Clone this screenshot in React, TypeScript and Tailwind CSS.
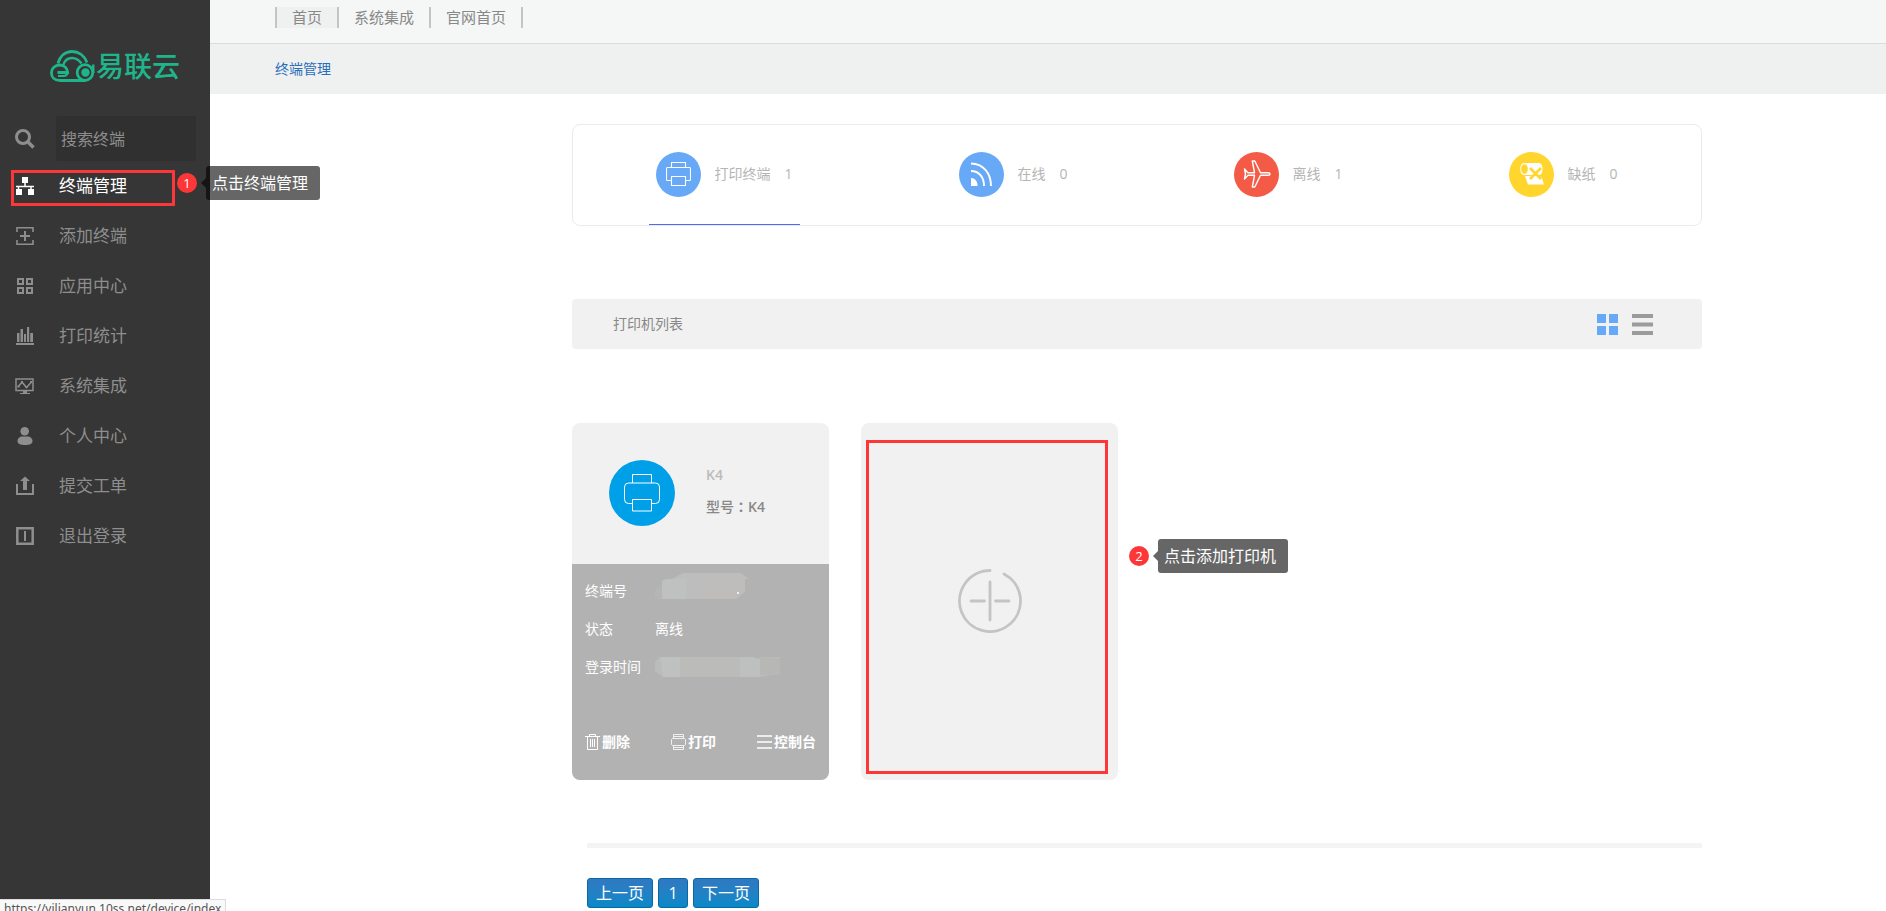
import type { ReactNode } from 'react'

const navItems = [
  { label: '添加终端', icon: <AddIcon /> },
  { label: '应用中心', icon: <AppsIcon /> },
  { label: '打印统计', icon: <StatsIcon /> },
  { label: '系统集成', icon: <MonitorIcon /> },
  { label: '个人中心', icon: <UserIcon /> },
  { label: '提交工单', icon: <UploadIcon /> },
  { label: '退出登录', icon: <ExitIcon /> },
]

const stats = [
  { label: '打印终端', count: 1, color: 'bg-[#67a9f7]', icon: <PrinterIcon />, active: true },
  { label: '在线', count: 0, color: 'bg-[#67a9f7]', icon: <SignalIcon />, active: false },
  { label: '离线', count: 1, color: 'bg-[#f45b47]', icon: <PlaneIcon />, active: false },
  { label: '缺纸', count: 0, color: 'bg-[#ffd52e]', icon: <PaperIcon />, active: false },
]

function Logo() {
  return (
    <a href="#" className="flex items-center gap-px text-[#1fb58a]">
      <svg width="45" height="32" viewBox="0 0 45 32" fill="none" stroke="currentColor" strokeWidth="2.800">
        <path d="M8 13.500C10 6 15.500 1.500 22 1.500S34.500 5.500 37 12.500" />
        <path d="M13 15.500C14.500 10.500 18 8 22 8s7 2 9.500 5.500" strokeWidth="2.500" />
        <path d="M36 30.500H10C4.500 30.500 1.400 27 1.400 22.700S5 15 9.800 15s7.400 3.500 7.800 7.500H7.500" />
        <path d="M17.500 22c0 2.500-1.500 4-4 4H8" strokeWidth="2.200" />
        <circle cx="35" cy="22.500" r="7.800" />
        <circle cx="35.500" cy="22.500" r="4.200" fill="currentColor" stroke="none" />
        <path d="M43.300 14.500V23" strokeWidth="2.400" />
      </svg>
      <span className="text-[28px] leading-8 font-medium">易联云</span>
    </a>
  )
}

function SearchIcon() {
  return (
    <svg width="20" height="20" viewBox="0 0 20 20" fill="none" stroke="#8e8e8e" strokeWidth="3">
      <circle cx="8" cy="8" r="6.500" />
      <path d="M12.500 12.500l6 6" strokeWidth="3.500" />
    </svg>
  )
}

function TreeIcon() {
  return (
    <svg width="20" height="20" viewBox="0 0 20 20" fill="#fff">
      <path d="M7 1h6v6H7zM1 13h6v6H1zM13 13h6v6h-6z" />
      <path d="M10 7v3M1 10.500h18M3.500 10v3M16 10v3" stroke="#fff" strokeWidth="1.500" />
    </svg>
  )
}

function AddIcon() {
  return (
    <svg width="20" height="20" viewBox="0 0 20 20" fill="none" stroke="currentColor" strokeWidth="1.600">
      <path d="M2 6V1.800h16V6M2 14v4.200h16V14" />
      <path d="M5 10h10M10 5v10" strokeWidth="2" />
    </svg>
  )
}

function AppsIcon() {
  return (
    <svg width="20" height="20" viewBox="0 0 20 20" fill="none" stroke="currentColor" strokeWidth="2">
      <path d="M3 3h5v5H3zM12 3h5v5h-5zM3 12h5v5H3zM12 12h5v5h-5z" />
    </svg>
  )
}

function StatsIcon() {
  return (
    <svg width="20" height="20" viewBox="0 0 20 20" fill="currentColor">
      <path d="M2 7h2.500v9H2zM5.500 3H8v13H5.500zM9 8h2v8H9zM12 1h2.200v15H12zM15.200 7H18v9h-2.800zM1 17h18v2H1z" />
    </svg>
  )
}

function MonitorIcon() {
  return (
    <svg width="20" height="20" viewBox="0 0 20 20" fill="none" stroke="currentColor" strokeWidth="1.500">
      <path d="M1 3h17v11.500H1z" />
      <path d="M3 11l4-5 4.500 5.500L16.500 6" />
      <path d="M8 15h4v2h3v1H5v-1h3z" fill="currentColor" stroke="none" />
      <path d="M6 5h2v2.500H6zM10.500 10h2v2h-2zM15 5h2v2h-2zM2.500 9.500h2v2h-2z" fill="currentColor" stroke="none" />
    </svg>
  )
}

function UserIcon() {
  return (
    <svg width="20" height="20" viewBox="0 0 20 20" fill="currentColor">
      <circle cx="9.700" cy="5.300" r="4.300" />
      <path d="M6 10.500h8c2.500 1 3.500 3 3.500 4.500 0 3-3 4-7.500 4s-7.500-1-7.500-4c0-1.500 1-3.500 3.500-4.500z" />
    </svg>
  )
}

function UploadIcon() {
  return (
    <svg width="20" height="20" viewBox="0 0 20 20" fill="currentColor">
      <path d="M10 .5l5 4.500h-3v9H8V5H5z" />
      <path d="M1 8h2v9h14V8h2v11H1z" />
    </svg>
  )
}

function ExitIcon() {
  return (
    <svg width="20" height="20" viewBox="0 0 20 20" fill="none" stroke="currentColor" strokeWidth="2.500">
      <path d="M2.300 2.300h15.400v15.400H2.300z" />
      <path d="M10 5v10" strokeWidth="2" />
    </svg>
  )
}

function PrinterIcon() {
  return (
    <svg width="25" height="24" viewBox="0 0 25 24" fill="none" stroke="#fff" strokeWidth="1.100">
      <path d="M5.500 5.500v-5h14v5" />
      <path d="M5.500 18.500h-4a1 1 0 0 1-1-1V6.500a1 1 0 0 1 1-1h22a1 1 0 0 1 1 1v11a1 1 0 0 1-1 1h-4" />
      <path d="M5.500 14.500h14v9h-14z" />
    </svg>
  )
}

function SignalIcon() {
  return (
    <svg width="23" height="24" viewBox="0 0 23 24" fill="none" stroke="#fff" strokeWidth="1.900">
      <path d="M1 16c4 0 6.500 3 6.500 8H1z" fill="#fff" stroke="none" />
      <path d="M1 9c8 0 13 6 13 15M1 1.500C13 1.500 21 11 21 24" />
    </svg>
  )
}

function PlaneIcon() {
  return (
    <svg width="28" height="28" viewBox="0 0 28 28" fill="none" stroke="#fff" strokeWidth="1.400" strokeLinejoin="round">
      <path d="M1.500 9L5 12.700h6.500L9.300 1h2.500l5.700 11.700h7.500c1.500 0 2 .8 2 1.300s-.5 1.300-2 1.300h-7.500L11.800 27H9.300l2.200-11.700H5L1.500 19l1-5z" />
    </svg>
  )
}

function PaperIcon() {
  return (
    <svg width="24" height="22" viewBox="0 0 24 22">
      <path d="M4 0h15c2.500 0 3.500 3 3.500 6s-1 6-3.500 6H4C1.500 12 .3 9 .3 6S1.500 0 4 0z" fill="#fff" />
      <ellipse cx="4.500" cy="6" rx="3.300" ry="4.800" fill="#ffd52e" />
      <path d="M5 13h12l4.500 1L24 21.500H8z" fill="#fff" />
      <path d="M10 5l11 11M21 5L10 16" stroke="#ffd52e" strokeWidth="2.600" />
    </svg>
  )
}

function Marker({ num, text }: { num: number; text: string }) {
  return (
    <div className="flex items-center">
      <span className="flex size-5 items-center justify-center rounded-full bg-[#fd3737] text-[13px] leading-5 text-white">
        {num}
      </span>
      <svg width="5" height="10" viewBox="0 0 5 10" className="ml-1">
        <path d="M5 0v10L0 5z" fill="#000" fillOpacity=".6" />
      </svg>
      <span className="h-[34px] rounded-[3px] bg-black/60 pr-3 pl-[6px] text-[16px] leading-[34px] whitespace-nowrap text-white">
        {text}
      </span>
    </div>
  )
}

function Action({ icon, children }: { icon: ReactNode; children: ReactNode }) {
  return (
    <button className="flex items-center gap-[2px] text-[14px] leading-5 font-bold text-white">
      {icon}
      {children}
    </button>
  )
}

function Sidebar() {
  return (
    <aside className="relative w-[210px] shrink-0 bg-[#363636] text-[#8e8e8e]">
      <div className="flex h-[116px] items-start pt-[50px] pl-[50px]">
        <Logo />
      </div>
      <div className="flex h-[45px] items-center pr-[14px] pl-[15px]">
        <label htmlFor="search" aria-label="搜索终端" className="w-[41px] shrink-0">
          <SearchIcon />
        </label>
        <input
          id="search"
          type="text"
          placeholder="搜索终端"
          className="h-full w-full min-w-0 rounded-[3px] bg-[#303030] px-[5px] text-[16px] placeholder:text-[#8e8e8e]"
        />
      </div>
      <nav className="text-[17px] leading-6">
        <a href="#" className="flex h-[50px] items-center gap-6 pl-[15px] text-white">
          <TreeIcon />
          终端管理
        </a>
        {navItems.map((item) => (
          <a key={item.label} href="#" className="flex h-[50px] items-center gap-6 pl-[15px]">
            {item.icon}
            {item.label}
          </a>
        ))}
      </nav>
      <div className="absolute top-[170px] left-[11px] h-9 w-[164px] border-[3px] border-[#fd3737]" />
      <div className="absolute top-[166px] left-[177px] z-10">
        <Marker num={1} text="点击终端管理" />
      </div>
    </aside>
  )
}

function TopBar() {
  return (
    <header>
      <div className="h-11 border-b border-[#d9dcdc] bg-[#f5f7f6] pt-[7px] pl-[65px]">
        <nav className="flex h-[21px] text-[15px] leading-[21px] text-[#888]">
          <a href="#" className="border-x-2 border-[#c4c4c4] bg-[#eff1f1] px-[15px]">首页</a>
          <a href="#" className="border-r-2 border-[#c4c4c4] px-[15px]">系统集成</a>
          <a href="#" className="border-r-2 border-[#c4c4c4] px-[15px]">官网首页</a>
        </nav>
      </div>
      <div className="flex h-[50px] items-center bg-[#eff1f1] pl-[65px]">
        <a href="#" className="text-[14px] leading-5 text-[#2a6ebb]">终端管理</a>
      </div>
    </header>
  )
}

function StatCard() {
  return (
    <section className="flex h-[102px] justify-around rounded-lg border border-[#ebebeb] text-[14px] leading-5 text-[#b5b5b5]">
      {stats.map((s) => (
        <div
          key={s.label}
          className={`flex items-center border-b px-[7px] pt-[16px] pb-[17px] ${s.active ? 'border-[#4a6cf7]' : 'border-transparent'}`}
        >
          <span className={`mr-[13px] flex size-[45px] items-center justify-center rounded-full ${s.color}`}>
            {s.icon}
          </span>
          <span className="mr-[14px]">{s.label}</span>
          <span>{s.count}</span>
        </div>
      ))}
    </section>
  )
}

function PrinterCard() {
  return (
    <article className="w-[257px] overflow-hidden rounded-lg bg-[#f1f1f1]">
      <div className="flex h-[141px] items-start pt-[37px] pl-[37px] text-[14px] leading-5 font-semibold">
        <span className="flex size-[66px] items-center justify-center rounded-full bg-[#00a0e9]">
          <svg width="36" height="38" viewBox="0 0 36 38" fill="none" stroke="#fff">
            <path d="M8.500 9V.5h19V9" />
            <path d="M8.500 29.500h-4a4 4 0 0 1-4-4V13a4 4 0 0 1 4-4h27a4 4 0 0 1 4 4v12.500a4 4 0 0 1-4 4h-4" />
            <path d="M8.500 25.500h19v11.500h-19z" />
          </svg>
        </span>
        <div className="flex flex-col gap-[11px] pt-[5px] pl-[31px]">
          <h3 className="text-[#bbb]">K4</h3>
          <p className="text-[#888]">
            <span className="font-medium">型号</span>
            <span lang="zh-TW" className="font-['Noto_Sans_CJK_TC',sans-serif]">：</span>
            K4
          </p>
        </div>
      </div>
      <div className="h-[216px] bg-[#b2b2b2] px-[13px] pt-2 text-[14px] text-white">
        <dl className="grid grid-cols-[70px_1fr] leading-[38px]">
          <dt>终端号</dt>
          <dd className="flex h-[38px] items-start">
            <svg width="96" height="28" viewBox="0 0 96 28">
              <path d="M0 22l2-5 9-3v-4L28 1h58l8 6h-4v13l-9 1v6H11L0 26z" fill="#bdbdbd" />
              <path d="M0 26l1-9 10-5v14z" fill="#b5b5b5" />
              <path d="M7 9l4-2h20v20H7z" fill="#bfc1c0" />
              <path d="M51 7h39v13l-9 7H51z" fill="#bebdbb" />
              <circle cx="83" cy="21" r="1" fill="#fff" />
            </svg>
          </dd>
          <dt>状态</dt>
          <dd>离线</dd>
          <dt>登录时间</dt>
          <dd className="flex items-center">
            <svg width="126" height="20" viewBox="0 0 126 20">
              <path d="M5 0h93l1 3 7-3h19v18h-8l-11 2H8L0 14V5z" fill="#bbbbba" />
              <path d="M5 0h20v20H8z" fill="#bfc0c0" />
              <path d="M85 0h13l7 3v17H85z" fill="#bec0c0" />
              <path d="M105 1h20v17h-20z" fill="#b7b7b6" />
            </svg>
          </dd>
        </dl>
        <div className="mt-[46px] flex justify-between">
          <Action
            icon={
              <svg width="15" height="16" viewBox="0 0 15 16" fill="none" stroke="#fff">
                <path d="M0 2.500h15M4.500 2V.5h6V2M2.500 3v12.500h10V3M5.500 5v8M7.500 5v8M9.500 5v8" />
              </svg>
            }
          >
            删除
          </Action>
          <Action
            icon={
              <svg width="15" height="16" viewBox="0 0 15 16" fill="none" stroke="#fff">
                <path d="M2.500 4V.5h10V4M2.500 11.500h-1l-1-1v-5l1-1h12l1 1v5l-1 1h-1M3 2.500h9" strokeOpacity=".8" />
                <path d="M2.500 11.500h10v4h-10zM3 13.500h9" strokeOpacity=".8" />
              </svg>
            }
          >
            打印
          </Action>
          <Action
            icon={
              <svg width="15" height="16" viewBox="0 0 15 16" stroke="#fff" strokeWidth="1.400">
                <path d="M0 2h15M0 8h15M0 14h15" />
              </svg>
            }
          >
            控制台
          </Action>
        </div>
      </div>
    </article>
  )
}

function AddCard() {
  return (
    <div className="relative h-[357px] w-[257px]">
      <button aria-label="添加打印机" className="flex h-full w-full items-center justify-center rounded-lg bg-[#f1f1f1] pb-px">
        <svg width="64" height="64" viewBox="0 0 64 64" fill="none" stroke="#c4c4c4" strokeWidth="2.800" strokeLinecap="round">
          <path d="M32 1.500A30.500 30.500 0 1 0 46 4.900" />
          <path d="M32 13v38M13 32h13.500M37.500 32H51" />
        </svg>
      </button>
      <div className="pointer-events-none absolute top-[17px] left-[5px] h-[334px] w-[242px] border-[3px] border-[#fd3737]" />
      <div className="absolute top-[116px] left-[268px]">
        <Marker num={2} text="点击添加打印机" />
      </div>
    </div>
  )
}

function PageButton({ children }: { children: ReactNode }) {
  return (
    <button className="h-[30px] min-w-[30px] rounded-[3px] border border-[#0d67a3] bg-linear-to-b from-[#2f79c1] to-[#0489c8] px-2 text-[16px] leading-6 text-white">
      {children}
    </button>
  )
}

export default function App() {
  return (
    <div className="flex min-h-screen bg-white font-['Open_Sans','Noto_Sans_CJK_SC',sans-serif]">
      <Sidebar />
      <div className="min-w-0 flex-1">
        <TopBar />
        <main className="pt-[30px] pr-[184px] pl-[362px]">
          <StatCard />
          <section className="mt-[73px] flex h-[50px] items-center justify-between rounded bg-[#f1f1f1] pr-[49px] pl-[41px]">
            <h2 className="text-[14px] leading-5 text-[#888]">打印机列表</h2>
            <div className="flex gap-[14px]">
              <button aria-label="网格视图">
                <svg width="21" height="21" viewBox="0 0 21 21" fill="#67a9f7">
                  <path d="M0 0h9v9H0zM12 0h9v9h-9zM0 12h9v9H0zM12 12h9v9h-9z" />
                </svg>
              </button>
              <button aria-label="列表视图">
                <svg width="21" height="21" viewBox="0 0 21 21" fill="#9b9b9b">
                  <path d="M0 0h21v4H0zM0 8.500h21v4H0zM0 17h21v4H0z" />
                </svg>
              </button>
            </div>
          </section>
          <section className="mt-[74px] flex gap-8">
            <PrinterCard />
            <AddCard />
          </section>
          <div className="mt-[63px] ml-[15px] border-t-[5px] border-[#f4f4f4] pt-[30px]">
            <div className="flex gap-[5px]">
              <PageButton>上一页</PageButton>
              <PageButton>1</PageButton>
              <PageButton>下一页</PageButton>
            </div>
          </div>
        </main>
      </div>
      <div className="fixed bottom-0 left-0 h-3 overflow-hidden border-t border-r border-[#ddd] bg-[#f9f9f9] px-1 font-['Noto_Sans',sans-serif] text-[12px] leading-[18px] text-[#555]">
        https://yilianyun.10ss.net/device/index
      </div>
    </div>
  )
}
